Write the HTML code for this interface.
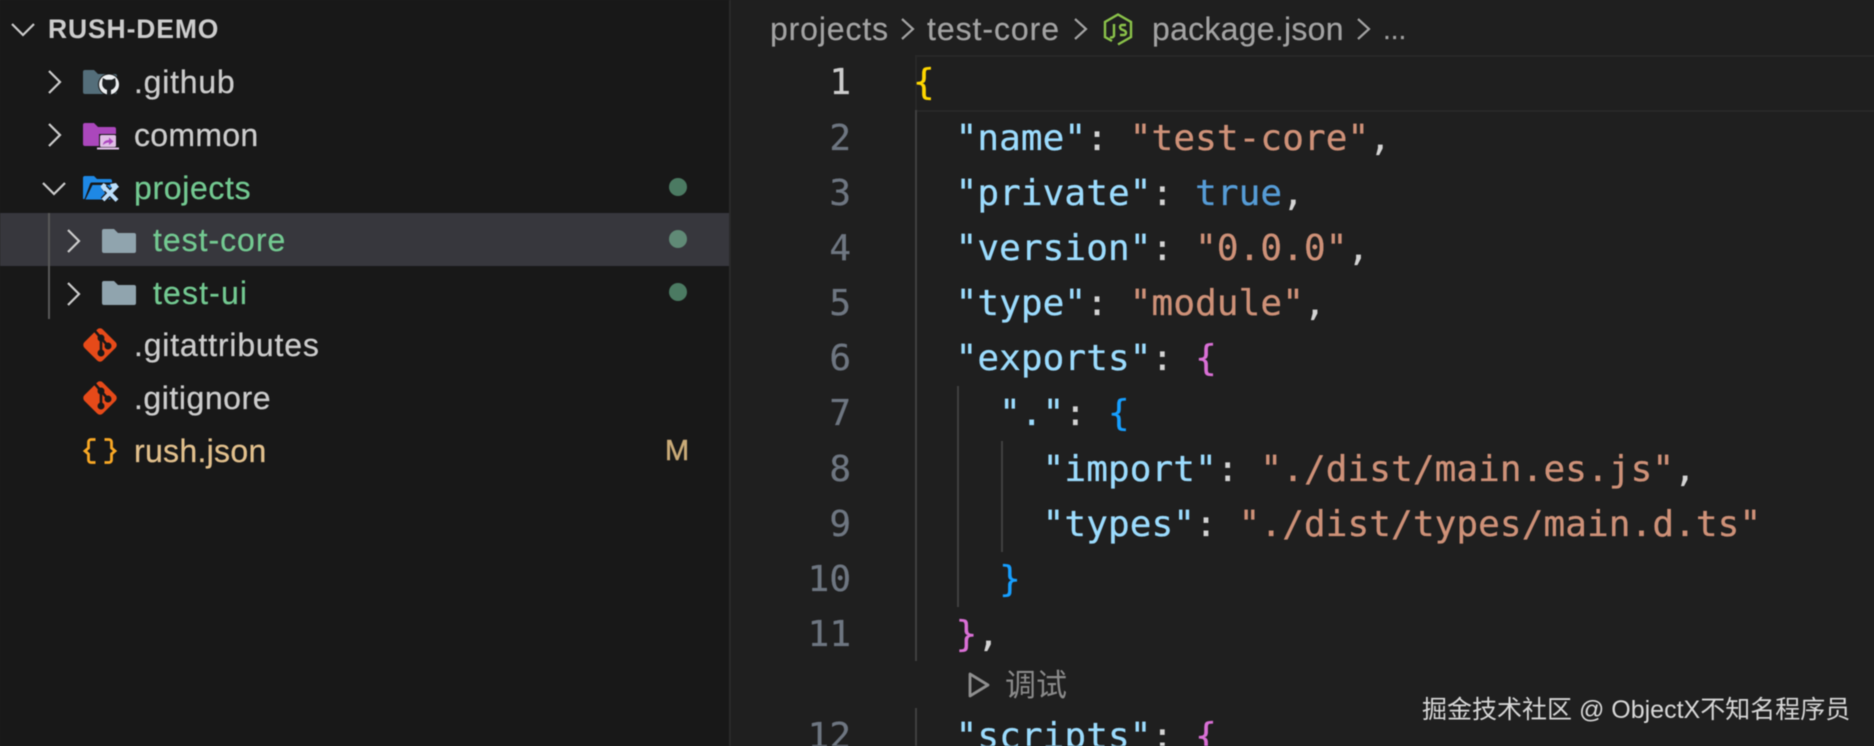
<!DOCTYPE html>
<html><head><meta charset="utf-8">
<style>
html,body{margin:0;padding:0;width:1874px;height:746px;overflow:hidden;background:#1f1f1f}
#r{position:relative;width:1874px;height:746px;overflow:hidden;filter:blur(.45px)}
.a{position:absolute}
#side{left:0;top:0;width:729px;height:746px;background:#181818}
#sb{left:729px;top:0;width:2px;height:746px;background:#2a2a2a}
#sel{left:0;top:213px;width:729px;height:53px;background:#37373d}
.t{position:absolute;white-space:pre;font-family:"Liberation Sans",sans-serif;font-size:32px;line-height:40px;color:#cccccc;-webkit-text-stroke:.25px currentColor}
.g{color:#73c991}
.c{position:absolute;white-space:pre;font-family:"DejaVu Sans Mono",monospace;font-size:36px;line-height:50px;color:#d4d4d4;letter-spacing:.1px;-webkit-text-stroke:.3px currentColor}
.n{position:absolute;white-space:pre;font-family:"DejaVu Sans Mono",monospace;font-size:36px;line-height:50px;color:#6e7681;text-align:right;width:100px;left:751px;-webkit-text-stroke:.3px currentColor}
.k{color:#9cdcfe}.s{color:#ce9178}.b{color:#569cd6}.y{color:#ffd700}.p{color:#da70d6}.u{color:#179fff}
.d{position:absolute;width:18px;height:18px;border-radius:50%;background:#4b7a62;left:669px}
.v{position:absolute;width:2px;background:#404040}
.bc{position:absolute;white-space:pre;font-family:"Liberation Sans",sans-serif;font-size:32px;line-height:40px;color:#a3a3a3;top:9px;-webkit-text-stroke:.2px currentColor}
svg{position:absolute;overflow:visible}
</style></head><body><div id="r">
<div class="a" id="side"></div><div class="a" id="sb"></div><div class="a" id="sel"></div>
<div class="a" style="top:213px;width:2px;height:106px;background:#585858;left:48px"></div>

<svg style="left:0;top:0" width="730" height="500" fill="none" stroke="#cccccc" stroke-width="2.2">
<path d="M12 24l11 11 11-11"/><path d="M49 71l11 11-11 11"/><path d="M49 124l11 11-11 11"/><path d="M43 183l11 11 11-11"/>
<path d="M68 230l11 11-11 11"/><path d="M68 283l11 11-11 11"/>
</svg>

<div class="t" style="left:48px;top:9px;font-weight:bold;font-size:26.5px;color:#cccccc;letter-spacing:.87px;-webkit-text-stroke:0">RUSH-DEMO</div>

<!-- github folder -->
<svg style="left:83px;top:69px" width="36" height="28" viewBox="0 0 36 28">
<path d="M0 3a2 2 0 0 1 2-2h9l4 4h17a2 2 0 0 1 2 2v16a2 2 0 0 1-2 2H2a2 2 0 0 1-2-2z" fill="#546e7a"/>
<circle cx="26" cy="15.500" r="11" fill="#181818"/>
<circle cx="26" cy="15.500" r="10" fill="#eceff1"/>
<path d="M19.800 9l3.400 1.700h5.600L32.200 9l.6 5a6.500 6.500 0 0 1-4.800 7v5.500h-4V21a6.500 6.500 0 0 1-4.800-7z" fill="#1d2022"/>
</svg>
<!-- common folder -->
<svg style="left:83px;top:122px" width="36" height="28" viewBox="0 0 36 28">
<path d="M0 3a2 2 0 0 1 2-2h9l4 4h16a2 2 0 0 1 2 2v15a2 2 0 0 1-2 2H2a2 2 0 0 1-2-2z" fill="#ab47bc"/>
<rect x="16" y="12" width="18" height="15" fill="#181818"/>
<rect x="17" y="13" width="16" height="12" rx="1.500" fill="#e1bee7"/>
<rect x="14" y="25.500" width="22" height="2" fill="#e1bee7"/>
<path d="M20 23c0-3 2.500-5 6-5v-2.500l4.500 4-4.500 3.500v-2.500c-2.500 0-4.500 1-6 2.500z" fill="#ab47bc"/>
</svg>
<!-- projects open folder -->
<svg style="left:83px;top:175px" width="36" height="28" viewBox="0 0 36 28">
<path d="M0 3a2 2 0 0 1 2-2h9l3 3h13a2 2 0 0 1 2 2v1.500H9a2 2 0 0 0-2 1.500L1.500 24H0z" fill="#1e88e5"/>
<path d="M9.500 10H34l-6 13a2 2 0 0 1-2 1.500H2.500z" fill="#1e88e5"/>
<path d="M21 12l13 13.500M33 12L20 25" stroke="#181818" stroke-width="6.500"/>
<path d="M21 12l13 13.500M33 12L20 25" stroke="#bbdefb" stroke-width="4"/>
<path d="M17.500 11.500l3-3.500 3 2-1 2 1.500 2-3 2.500-2-2.500zM27 9l6-1 3 4-3 2-2-1.500-2 1z" fill="#bbdefb"/>
</svg>
<!-- plain folders -->
<svg style="left:102px;top:228px" width="34" height="26" viewBox="0 0 34 26"><path d="M0 3a2 2 0 0 1 2-2h10l4 4h16a2 2 0 0 1 2 2v16a2 2 0 0 1-2 2H2a2 2 0 0 1-2-2z" fill="#90a4ae"/></svg>
<svg style="left:102px;top:280px" width="34" height="26" viewBox="0 0 34 26"><path d="M0 3a2 2 0 0 1 2-2h10l4 4h16a2 2 0 0 1 2 2v16a2 2 0 0 1-2 2H2a2 2 0 0 1-2-2z" fill="#90a4ae"/></svg>
<!-- git icons -->
<svg style="left:83px;top:328px" width="34" height="34" viewBox="0 0 34 34">
<rect x="4" y="4" width="26" height="26" rx="4" transform="rotate(45 17 17)" fill="#e64a19"/>
<path d="M12 3l6 7v15M18 10l7 8" fill="none" stroke="#181818" stroke-width="2.600"/>
<circle cx="18" cy="10" r="3.500" fill="#181818"/><circle cx="25" cy="18" r="3.500" fill="#181818"/><circle cx="18" cy="25" r="3.500" fill="#181818"/>
</svg>
<svg style="left:83px;top:381px" width="34" height="34" viewBox="0 0 34 34">
<rect x="4" y="4" width="26" height="26" rx="4" transform="rotate(45 17 17)" fill="#e64a19"/>
<path d="M12 3l6 7v15M18 10l7 8" fill="none" stroke="#181818" stroke-width="2.600"/>
<circle cx="18" cy="10" r="3.500" fill="#181818"/><circle cx="25" cy="18" r="3.500" fill="#181818"/><circle cx="18" cy="25" r="3.500" fill="#181818"/>
</svg>
<!-- braces icon -->
<svg style="left:84px;top:438px" width="32" height="26" viewBox="0 0 32 26" fill="none" stroke="#f9a825" stroke-width="2.800">
<path d="M11.500 1.500H7A2.500 2.500 0 0 0 4.500 4v6L1 13l3.500 3v6A2.500 2.500 0 0 0 7 24.500h4.500"/>
<path d="M20.500 1.500H25A2.500 2.500 0 0 1 27.500 4v6L31 13l-3.500 3v6a2.500 2.500 0 0 1-2.500 2.500h-4.500"/>
</svg>

<div class="t" style="left:134px;top:62px;letter-spacing:.77px">.github</div>
<div class="t" style="left:134px;top:115px;letter-spacing:.3px">common</div>
<div class="t g" style="left:134px;top:168px;letter-spacing:.65px">projects</div>
<div class="t g" style="left:153px;top:220px;letter-spacing:.97px">test-core</div>
<div class="t g" style="left:153px;top:273px;letter-spacing:1.15px">test-ui</div>
<div class="t" style="left:134px;top:325px;letter-spacing:.81px">.gitattributes</div>
<div class="t" style="left:134px;top:378px;letter-spacing:.54px">.gitignore</div>
<div class="t" style="left:134px;top:431px;color:#e2c08d;letter-spacing:.3px">rush.json</div>
<div class="t" style="left:665px;top:431px;color:#c9aa78;font-size:29px;-webkit-text-stroke:.5px currentColor">M</div>
<div class="d" style="top:178px"></div>
<div class="d" style="top:230px;background:#608a76"></div>
<div class="d" style="top:283px"></div>

<!-- breadcrumbs -->
<div class="bc" style="left:770px;letter-spacing:.86px">projects</div>
<div class="bc" style="left:927px;letter-spacing:.95px">test-core</div>
<div class="bc" style="left:1152px;letter-spacing:.27px">package.json</div>
<div class="bc" style="left:1383px;font-size:28px;top:10px">...</div>
<svg style="left:0;top:0" width="1500" height="60" fill="none" stroke="#a3a3a3" stroke-width="2.200">
<path d="M902 19l11 10-11 10M1075 19l11 10-11 10M1358 19l11 10-11 10"/>
</svg>
<svg style="left:1103px;top:13px" width="30" height="33" viewBox="0 0 30 33" fill="none" stroke="#8bc34a" stroke-width="2.400">
<path d="M9 28L2 24V9l13-7.500L28 9v15l-13 7.500"/>
<path d="M11 11v12a3 3 0 0 1-4 1"/>
<path d="M23 12h-4a2 2 0 0 0-2 2c0 4 6 2 6 6a2 2 0 0 1-2 2h-4"/>
</svg>

<!-- current line -->
<div class="a" style="left:915px;top:55px;width:959px;height:53px;border:2px solid #282828;border-right:0"></div>

<!-- guides -->
<div class="v" style="left:915px;top:110px;height:551px"></div>
<div class="v" style="left:915px;top:708px;height:38px"></div>
<div class="v" style="left:957px;top:386px;height:221px"></div>
<div class="v" style="left:1001px;top:441px;height:111px"></div>

<!-- line numbers -->
<div class="n" style="top:58px;color:#cccccc">1</div>
<div class="n" style="top:114px">2</div>
<div class="n" style="top:169px">3</div>
<div class="n" style="top:224px">4</div>
<div class="n" style="top:279px">5</div>
<div class="n" style="top:334px">6</div>
<div class="n" style="top:389px">7</div>
<div class="n" style="top:445px">8</div>
<div class="n" style="top:500px">9</div>
<div class="n" style="top:555px">10</div>
<div class="n" style="top:610px">11</div>
<div class="n" style="top:712px">12</div>

<!-- code -->
<div class="c y" style="left:913px;top:58px">{</div>
<div class="c" style="left:912px;top:114px">  <span class="k">"name"</span>: <span class="s">"test-core"</span>,</div>
<div class="c" style="left:912px;top:169px">  <span class="k">"private"</span>: <span class="b">true</span>,</div>
<div class="c" style="left:912px;top:224px">  <span class="k">"version"</span>: <span class="s">"0.0.0"</span>,</div>
<div class="c" style="left:912px;top:279px">  <span class="k">"type"</span>: <span class="s">"module"</span>,</div>
<div class="c" style="left:912px;top:334px">  <span class="k">"exports"</span>: <span class="p">{</span></div>
<div class="c" style="left:912px;top:389px">    <span class="k">"."</span>: <span class="u">{</span></div>
<div class="c" style="left:912px;top:445px">      <span class="k">"import"</span>: <span class="s">"./dist/main.es.js"</span>,</div>
<div class="c" style="left:912px;top:500px">      <span class="k">"types"</span>: <span class="s">"./dist/types/main.d.ts"</span></div>
<div class="c u" style="left:912px;top:555px">    }</div>
<div class="c" style="left:912px;top:610px">  <span class="p">}</span>,</div>
<div class="c" style="left:912px;top:712px">  <span class="k">"scripts"</span>: <span class="p">{</span></div>

<!-- codelens -->
<svg style="left:967px;top:671px" width="24" height="28" viewBox="0 0 24 28" fill="none" stroke="#8f8f8f" stroke-width="2.800"><path d="M3 3v22l18-11z" stroke-linejoin="round"/></svg>
<div class="a" style="left:1005px;top:663px;font:31px/40px 'Noto Sans CJK SC',sans-serif;color:#8a8a8a;white-space:pre">调试</div>

<!-- watermark -->
<div class="a" style="left:1422px;top:693px;font:25px/34px 'Liberation Sans','Noto Sans CJK SC',sans-serif;color:#d8d8d8;white-space:pre">掘金技术社区 @ ObjectX不知名程序员</div>
</div></body></html>
